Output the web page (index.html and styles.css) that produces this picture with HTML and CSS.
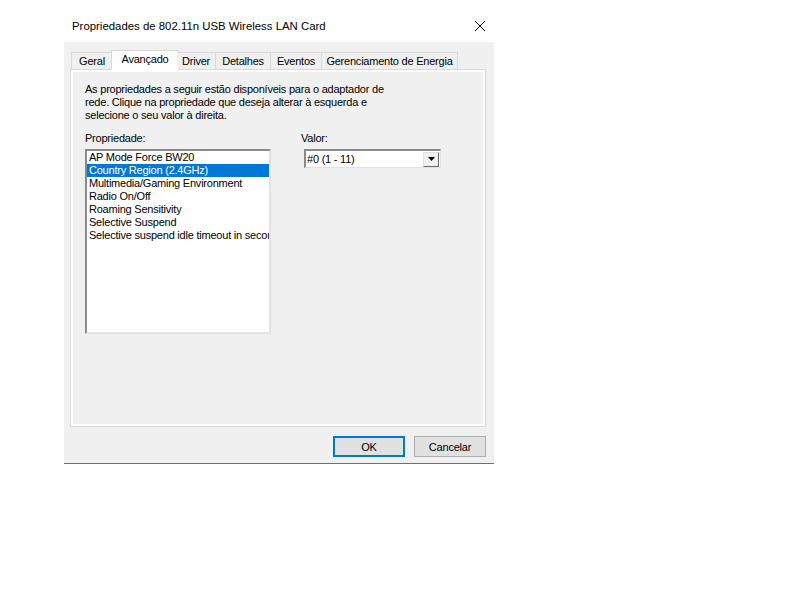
FILE: index.html
```html
<!DOCTYPE html>
<html lang="pt">
<head>
<meta charset="utf-8">
<title>Propriedades</title>
<link rel="stylesheet" href="styles.css">
</head>
<body>
<div class="dialog">
  <div class="titlebar">
    <span class="title">Propriedades de 802.11n USB Wireless LAN Card</span>
    <svg class="close" width="12" height="12" viewBox="0 0 12 12"><path d="M1 1L11 11M11 1L1 11" stroke="#000" stroke-width="1" fill="none"/></svg>
  </div>
  <div class="body">
    <div class="tabs">
      <div class="tab t-geral">Geral</div>
      <div class="tab selected t-av">Avançado</div>
      <div class="tab t-driver">Driver</div>
      <div class="tab t-det">Detalhes</div>
      <div class="tab t-ev">Eventos</div>
      <div class="tab t-ger">Gerenciamento de Energia</div>
    </div>
    <div class="panel">
      <p class="desc">As propriedades a seguir estão disponíveis para o adaptador de<br>rede. Clique na propriedade que deseja alterar à esquerda e<br>selecione o seu valor à direita.</p>
      <div class="cols">
        <div class="col-left">
          <div class="label">Propriedade:</div>
          <div class="listbox">
            <div class="item">AP Mode Force BW20</div>
            <div class="item sel">Country Region (2.4GHz)</div>
            <div class="item">Multimedia/Gaming Environment</div>
            <div class="item">Radio On/Off</div>
            <div class="item">Roaming Sensitivity</div>
            <div class="item">Selective Suspend</div>
            <div class="item">Selective suspend idle timeout in seconds</div>
          </div>
        </div>
        <div class="col-right">
          <div class="label">Valor:</div>
          <div class="combo">
            <span class="combo-text">#0 (1 - 11)</span>
            <span class="combo-btn"><svg width="7" height="4" viewBox="0 0 7 4"><path d="M0 0H7L3.5 4Z" fill="#000"/></svg></span>
          </div>
        </div>
      </div>
    </div>
    <div class="buttons">
      <div class="btn default">OK</div>
      <div class="btn">Cancelar</div>
    </div>
  </div>
</div>
</body>
</html>
```

FILE: styles.css
```css
html, body {
  margin: 0;
  padding: 0;
  background: #ffffff;
}
body {
  font-family: "Liberation Sans", Arial, sans-serif;
  font-size: 11px;
  letter-spacing: -0.22px;
  color: #000;
}
.dialog {
  margin-left: 64px;
  width: 430px;
}
.titlebar {
  height: 32px;
  padding-top: 10px;
  display: flex;
  align-items: center;
  justify-content: space-between;
  padding-left: 8px;
  padding-right: 8px;
}
.title {
  font-size: 11.4px;
  letter-spacing: 0;
  color: #000;
}
.close {
  margin-right: 0;
}
.body {
  background: #f0f0f0;
  height: 422px;
  box-sizing: border-box;
  padding: 8px 8px 0 6px;
  border-bottom: 1px solid #6f6f6f;
}
.tabs {
  display: flex;
  align-items: flex-end;
  height: 19px;
  padding-left: 1px;
  position: relative;
  z-index: 2;
}
.tab {
  height: 17px;
  box-sizing: border-box;
  border: 1px solid #d9d9d9;
  border-bottom: none;
  border-left: none;
  background: #f0f0f0;
  line-height: 17px;
  text-align: center;
  white-space: nowrap;
}
.t-geral { width: 42px; border-left: 1px solid #d9d9d9; }
.t-av { width: 64px; }
.t-driver { width: 39px; }
.t-det { width: 55px; }
.t-ev { width: 51px; }
.t-ger { width: 136px; }
.tab.selected {
  height: 20px;
  margin-bottom: -1px;
  background: #ffffff;
  border-left: 1px solid #d9d9d9;
  margin-left: -2px;
  margin-right: -2px;
  width: 68px;
  line-height: 16px;
}
.panel {
  width: 416px;
  height: 358px;
  box-sizing: border-box;
  border: 1px solid #d9d9d9;
  box-shadow: inset 0 0 0 2px #ffffff;
  background: #f0f0f0;
  padding: 13px 0 0 14px;
}
.desc {
  margin: 0;
  line-height: 13px;
  white-space: nowrap;
}
.cols {
  display: flex;
  margin-top: 10px;
}
.col-left {
  width: 186px;
}
.col-right {
  margin-left: 30px;
}
.label {
  line-height: 13px;
  height: 13px;
}
.listbox {
  margin-top: 4px;
  width: 186px;
  height: 185px;
  box-sizing: border-box;
  border-top: 2px solid #8a8a8a;
  border-left: 2px solid #8a8a8a;
  border-right: 2px solid #e3e3e3;
  border-bottom: 2px solid #e3e3e3;
  background: #fff;
  overflow: hidden;
}
.item {
  height: 13px;
  line-height: 13px;
  padding-left: 2px;
  white-space: nowrap;
  overflow: hidden;
}
.item.sel {
  background: #0078d7;
  color: #fff;
}
.combo {
  margin-top: 4px;
  margin-left: 3px;
  width: 137px;
  height: 19px;
  box-sizing: border-box;
  border-top: 2px solid #8a8a8a;
  border-left: 2px solid #8a8a8a;
  border-right: 1px solid #e3e3e3;
  border-bottom: 1px solid #e3e3e3;
  background: #fff;
  display: flex;
  align-items: center;
  justify-content: space-between;
}
.combo-text {
  padding-left: 1px;
  line-height: 13px;
}
.combo-btn {
  width: 16px;
  height: 15px;
  box-sizing: border-box;
  background: #f0f0f0;
  border-top: 1px solid #e3e3e3;
  border-left: 1px solid #e3e3e3;
  border-right: 1px solid #696969;
  border-bottom: 1px solid #696969;
  display: flex;
  align-items: center;
  justify-content: center;
  margin-right: 1px;
}
.buttons {
  display: flex;
  justify-content: flex-end;
  gap: 9px;
  margin-top: 9px;
  width: 416px;
}
.btn {
  width: 72px;
  height: 21px;
  box-sizing: border-box;
  border: 1px solid #adadad;
  background: #e1e1e1;
  display: flex;
  align-items: center;
  justify-content: center;
  font-size: 11px;
}
.btn.default {
  border: 2px solid #0078d7;
}
```
